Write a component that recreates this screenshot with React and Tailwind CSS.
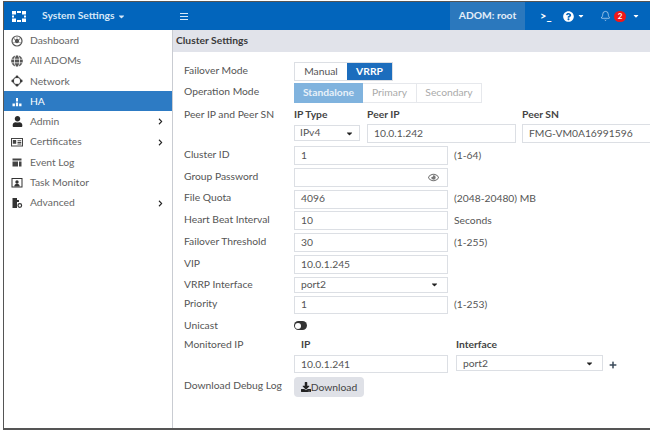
import React from 'react';
import { FaGlobe, FaUser, FaDownload, FaPlus, FaQuestionCircle, FaCaretDown, FaChevronRight, FaRegEye } from "react-icons/fa";
import { Bell } from "lucide-react";

const DashboardIcon = () => (
  <svg viewBox="0 0 12 12" className="w-3 h-3" fill="none" stroke="#555" strokeWidth="1.2">
    <circle cx="6" cy="6" r="5" />
    <circle cx="6" cy="6" r="1.6" fill="#555" />
    <path d="M3 4.200h.8M8.200 4.200H9M6 2.400v.8M2.600 7.500h.8M8.600 7.500h.8" />
  </svg>
);

const NetworkIcon = () => (
  <svg viewBox="0 0 12 12" className="w-3 h-3" fill="#3a3a3a" stroke="#3a3a3a">
    <circle cx="6" cy="6" r="3.8" fill="none" strokeWidth="1" />
    <circle cx="6" cy="1.8" r="1.4" stroke="none" />
    <circle cx="6" cy="10.2" r="1.4" stroke="none" />
    <circle cx="1.8" cy="6" r="1.4" stroke="none" />
    <circle cx="10.2" cy="6" r="1.4" stroke="none" />
  </svg>
);

const HaIcon = () => (
  <svg viewBox="0 0 12 12" className="w-3 h-3" fill="#fff">
    <path d="M5 2h2v3.500H5zM1.500 7.500h2.400v2.800H1.500zM4.900 6.500h2.200v3.800H4.900zM8.100 7.500h2.400v2.800H8.100z" />
  </svg>
);

const CertIcon = () => (
  <svg viewBox="0 0 12 12" className="w-3 h-3" fill="#444">
    <path fillRule="evenodd" d="M0 2h12v8.500H0zM1 3v6.500h10V3z" />
    <path d="M1.800 4h3.400v3.800H1.800zM6.500 4.300h3.800v.9H6.500zM6.500 6h3.800v.9H6.500zM6.500 7.500h3.800v.9H6.500z" />
  </svg>
);

const EventLogIcon = () => (
  <svg viewBox="0 0 12 12" className="w-3 h-3" fill="#444">
    <path d="M1.500 2.500h9v2h-9zM1.500 5.500h5.500v5h-5.500zM8 5.500h2.500v5H8z" />
  </svg>
);

const TaskIcon = () => (
  <svg viewBox="0 0 12 12" className="w-3 h-3" fill="#333">
    <path fillRule="evenodd" d="M.5 1h11v9.500H.5zM1.500 2v7.500h9V2z" />
    <circle cx="6" cy="5" r="1.700" />
    <path d="M3.300 9.500c0-2 1-2.800 2.700-2.800s2.700.8 2.700 2.800z" />
  </svg>
);

const AdvancedIcon = () => (
  <svg viewBox="0 0 12 12" className="w-3 h-3" fill="#333">
    <path d="M1.500 1h4.500v10H1.500z" />
    <circle cx="8.800" cy="8.500" r="1.800" fill="none" stroke="#333" strokeWidth="1.200" />
    <path d="M6 3h2v2H6z" />
  </svg>
);

const GridLogo = () => (
  <svg viewBox="0 0 14 11" className="w-[14px] h-[11px]" fill="#fff">
    <path d="M0 0h4v3.500H0zM5 0h4v2H5zM10 0h4v3.500h-4zM0 4.500h2v2H0zM12 4.500h2v2h-2zM0 7.500h4V11H0zM5 9h4v2H5zM10 7.500h4V11h-4z" />
  </svg>
);

const menu = [
  { label: 'Dashboard', icon: <DashboardIcon /> },
  { label: 'All ADOMs', icon: <FaGlobe className="w-3 h-3 text-[#555]" /> },
  { label: 'Network', icon: <NetworkIcon /> },
  { label: 'HA', icon: <HaIcon />, active: true },
  { label: 'Admin', icon: <FaUser className="w-[11px] h-[11px] text-[#2a2a2a]" />, more: true },
  { label: 'Certificates', icon: <CertIcon />, more: true },
  { label: 'Event Log', icon: <EventLogIcon /> },
  { label: 'Task Monitor', icon: <TaskIcon /> },
  { label: 'Advanced', icon: <AdvancedIcon />, more: true },
];

function TextBox({ value, className = '', children }) {
  return (
    <div className={`border border-[#dcdfe4] bg-white flex items-center justify-between pl-[6px] pr-2 text-[#555] ${className}`}>
      <span>{value}</span>
      {children}
    </div>
  );
}

function Row({ label, children, className = '', labelClass = 'pb-[2px]' }) {
  return (
    <div className={`flex items-center ${className}`}>
      <div className={`w-[110px] shrink-0 text-[#555] ${labelClass}`}>{label}</div>
      {children}
    </div>
  );
}

const Note = ({ children }) => <span className="ml-[6px] text-[#555]">{children}</span>;
const Caret = () => <FaCaretDown className="w-[9px] h-[9px] text-[#222]" />;

export default function App() {
  return (
    <div className="w-[652px] h-[431px] bg-white overflow-hidden pt-[1px] text-[10.3px] font-['Lato','Liberation_Sans',sans-serif]">
      <div className="h-[429px] ml-[3px] mr-[2px] border-t border-b-2 border-l border-[#555] border-r-0 flex flex-col">
        <header className="h-[28px] bg-[#0265bc] flex items-center text-white shrink-0">
          <div className="w-[38px] pl-[8px]"><GridLogo /></div>
          <div className="w-[138px] flex items-center gap-[3px] font-bold text-[#d7e8f8]">
            System Settings <FaCaretDown className="w-[9px] h-[9px]" />
          </div>
          <div className="flex-1">
            <svg viewBox="0 0 8 7" className="w-2 h-[7px]" stroke="#d7e8f8" strokeWidth="1"><path d="M0 .5h8M0 3.500h8M0 6.500h8" /></svg>
          </div>
          <div className="h-full w-[75px] bg-[#2b78bd] flex items-center justify-center font-bold text-[#e4eef8]">ADOM: root</div>
          <div className="w-[38px] pl-[15px] font-bold text-[11px]">&gt;_</div>
          <div className="w-[37px] flex items-center gap-[3px]"><FaQuestionCircle className="w-[11px] h-[11px]" /><FaCaretDown className="w-2 h-2" /></div>
          <div className="flex items-center gap-[3px] w-[50px]">
            <Bell className="w-[11px] h-[12px] text-[#cfe2f5]" strokeWidth={1.5} />
            <span className="w-[12px] h-[11px] rounded-full bg-[#f01818] text-[8px] font-bold flex items-center justify-center">2</span>
            <FaCaretDown className="w-2 h-2 ml-[3px]" />
          </div>
        </header>

        <div className="flex flex-1 min-h-0">
          <aside className="w-[169px] shrink-0 border-r border-[#c9ccd2]">
            {menu.map((item) => (
              <div key={item.label} className={`h-[20.3px] flex items-center pl-[7px] pr-[6px] ${item.active ? 'bg-[#2d7bc4] text-white' : 'text-[#666]'}`}>
                <span className="w-[12px] flex justify-center mt-[1px]">{item.icon}</span>
                <span className="ml-[7px] flex-1 mt-[1px]">{item.label}</span>
                {item.more && <FaChevronRight className="w-[7px] h-[7px] text-[#222] mr-[2px] mt-[1px]" />}
              </div>
            ))}
          </aside>

          <main className="flex-1 min-w-0">
            <div className="h-[22px] bg-[#e1e3ea] flex items-center pl-[3px] font-bold text-[#3a3a3a]">Cluster Settings</div>
            <div className="pl-[11px] pt-[10px]">
              <Row label="Failover Mode" className="h-[19px]">
                <div className="flex h-[19px] border border-[#dcdfe4]">
                  <div className="w-[52px] flex items-center justify-center text-[#555]">Manual</div>
                  <div className="w-[45px] bg-[#1c6dbd] text-white font-bold flex items-center justify-center">VRRP</div>
                </div>
              </Row>
              <Row label="Operation Mode" className="h-[20px] mt-[2px]">
                <div className="flex h-[20px]">
                  <div className="w-[69px] bg-[#80b3de] text-[#e8f1f9] font-bold flex items-center justify-center">Standalone</div>
                  <div className="w-[53px] border-y border-[#e6e8ec] flex items-center justify-center text-[#aaa]">Primary</div>
                  <div className="w-[66px] border border-[#e6e8ec] flex items-center justify-center text-[#aaa]">Secondary</div>
                </div>
              </Row>
              <div className="flex mt-[3px]">
                <div className="w-[110px] shrink-0 text-[#555] h-[18px] flex items-center">Peer IP and Peer SN</div>
                <div className="w-[73px] shrink-0">
                  <div className="h-[18px] flex items-center font-bold text-[#444]">IP Type</div>
                  <div className="h-[16px] mt-[1px] w-[66px] border border-[#dcdfe4] flex items-center justify-between px-[5px] text-[#555]">IPv4 <Caret /></div>
                </div>
                <div className="w-[155px] shrink-0">
                  <div className="h-[18px] flex items-center font-bold text-[#444]">Peer IP</div>
                  <TextBox value="10.0.1.242" className="w-[149px] h-[19px]" />
                </div>
                <div className="flex-1 min-w-0">
                  <div className="h-[18px] flex items-center font-bold text-[#444]">Peer SN</div>
                  <TextBox value="FMG-VM0A16991596" className="h-[19px] border-r-0" />
                </div>
              </div>
              <Row label="Cluster ID" className="mt-[3px]"><TextBox value="1" className="w-[154px] h-[19px]" /><Note>(1-64)</Note></Row>
              <Row label="Group Password" className="mt-[2.8px]"><TextBox className="w-[154px] h-[19px]"><FaRegEye className="w-[11px] h-[11px] text-[#777]" /></TextBox></Row>
              <Row label="File Quota" className="mt-[2.8px]"><TextBox value="4096" className="w-[154px] h-[19px]" /><Note>(2048-20480) MB</Note></Row>
              <Row label="Heart Beat Interval" className="mt-[2.8px]"><TextBox value="10" className="w-[154px] h-[19px]" /><Note>Seconds</Note></Row>
              <Row label="Failover Threshold" className="mt-[2.8px]"><TextBox value="30" className="w-[154px] h-[19px]" /><Note>(1-255)</Note></Row>
              <Row label="VIP" className="mt-[2.8px]"><TextBox value="10.0.1.245" className="w-[154px] h-[19px]" /></Row>
              <Row label="VRRP Interface" className="mt-[3px]" labelClass=""><TextBox value="port2" className="w-[154px] h-[16px]"><Caret /></TextBox></Row>
              <Row label="Priority" className="mt-[3px]" labelClass="pb-[3px]"><TextBox value="1" className="w-[154px] h-[18px]" /><Note>(1-253)</Note></Row>
              <Row label="Unicast" className="mt-[2px] h-[20px]">
                <div className="w-[13px] h-[9px] rounded-full bg-[#333] flex items-center pl-[1px] mb-[1px]"><div className="w-[6px] h-[6px] rounded-full bg-white" /></div>
              </Row>
              <div className="flex">
                <div className="w-[110px] shrink-0 text-[#555] h-[17px] flex items-center">Monitored IP</div>
                <div className="w-[162px] shrink-0">
                  <div className="h-[17px] pl-[7px] flex items-center font-bold text-[#444]">IP</div>
                  <TextBox value="10.0.1.241" className="w-[154px] h-[18px] mt-[2px]" />
                </div>
                <div>
                  <div className="h-[17px] flex items-center font-bold text-[#444]">Interface</div>
                  <div className="flex items-center mt-[2px]">
                    <TextBox value="port2" className="w-[147px] h-[16px]"><Caret /></TextBox>
                    <FaPlus className="w-2 h-2 ml-[6px] mt-[3px] text-[#3a4a5a]" />
                  </div>
                </div>
              </div>
              <Row label="Download Debug Log" className="mt-[4px]" labelClass="pb-[3px]">
                <div className="w-[70px] h-[20px] bg-[#dfe1e7] rounded-sm flex items-center justify-center text-[#444]">
                  <FaDownload className="w-[10px] h-[10px] text-[#222]" />Download
                </div>
              </Row>
            </div>
          </main>
        </div>
      </div>
    </div>
  );
}
